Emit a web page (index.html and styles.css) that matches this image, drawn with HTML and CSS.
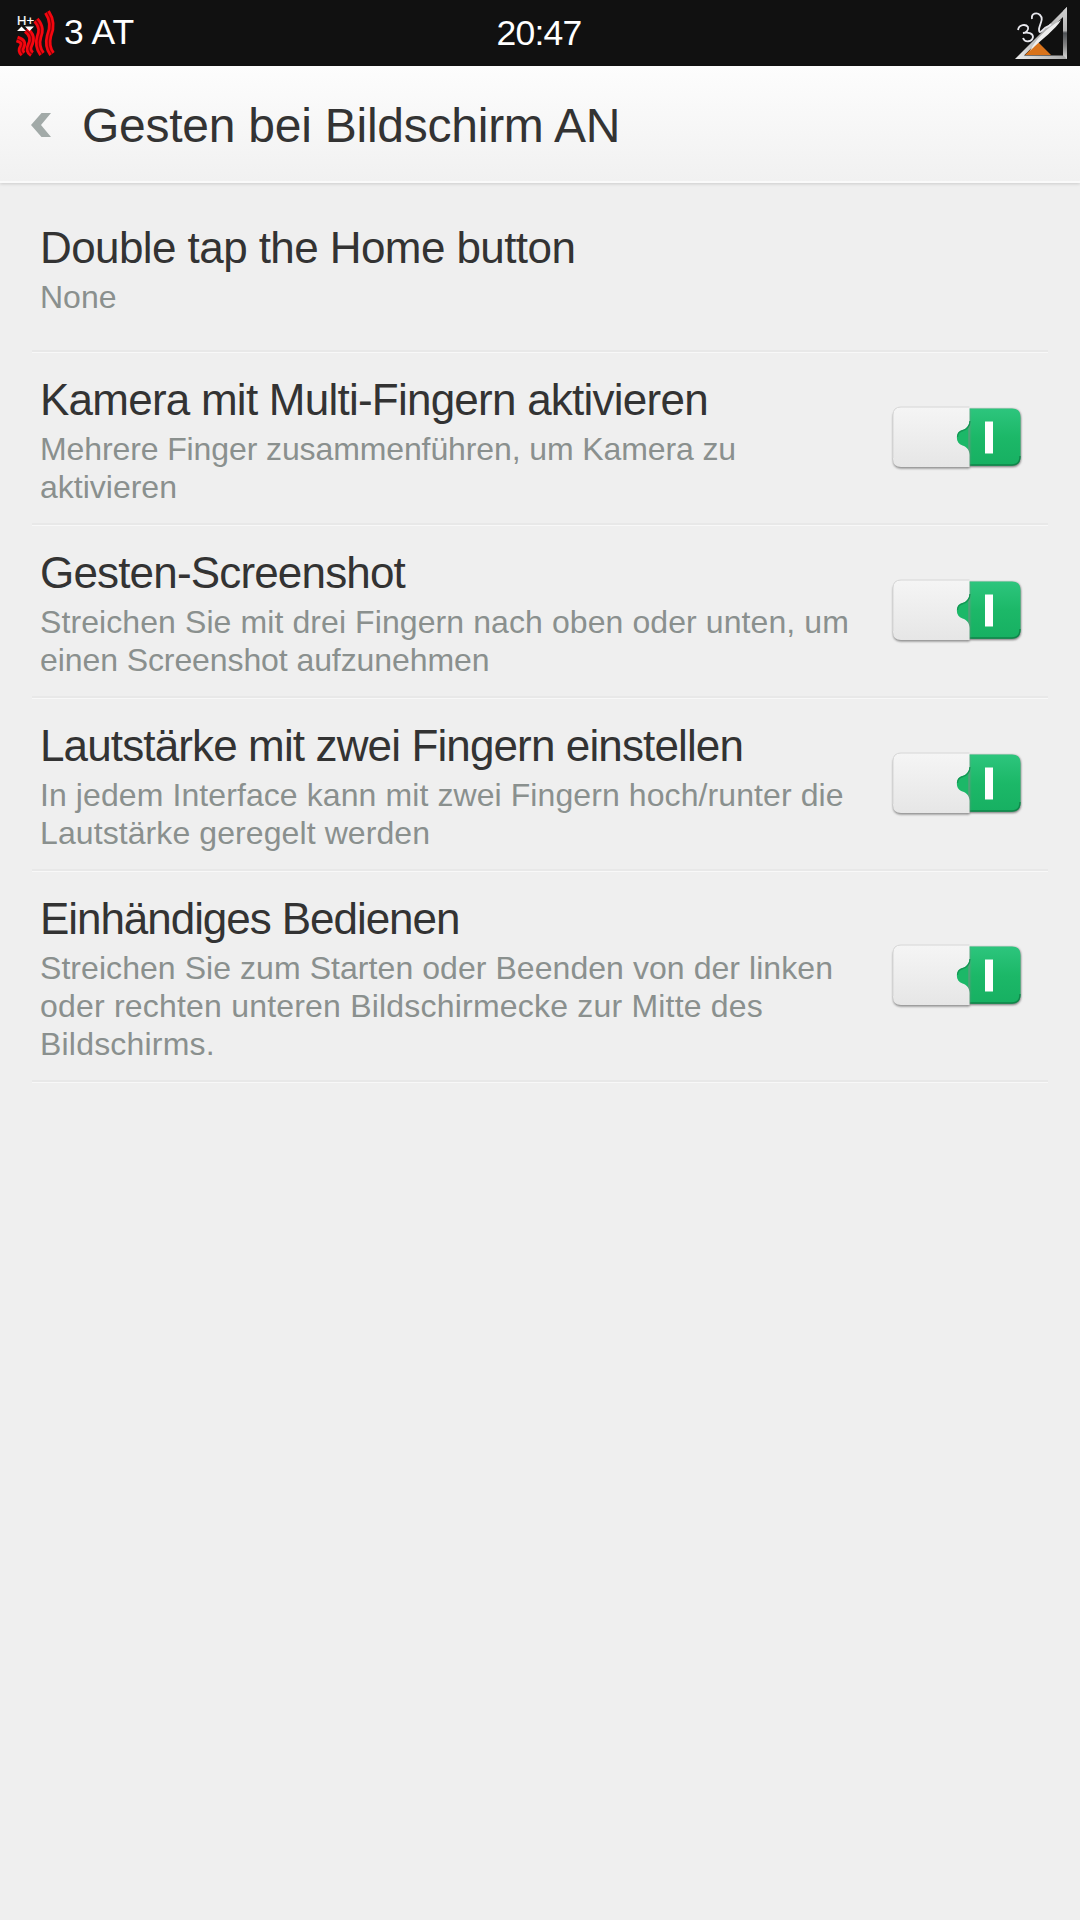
FILE: index.html
```html
<!DOCTYPE html>
<html lang="de">
<head>
<meta charset="utf-8">
<title>Gesten bei Bildschirm AN</title>
<link rel="stylesheet" href="styles.css">
</head>
<body>
<svg class="defs" width="0" height="0" aria-hidden="true">
  <defs>
    <linearGradient id="knob" x1="0" y1="0" x2="0" y2="1"><stop offset="0" stop-color="#f5f5f5"/><stop offset="1" stop-color="#e6e6e6"/></linearGradient>
    <linearGradient id="green" x1="0" y1="0" x2="0" y2="1"><stop offset="0" stop-color="#2dc57d"/><stop offset=".5" stop-color="#1cb868"/><stop offset="1" stop-color="#17b062"/></linearGradient>
    <filter id="soft" x="-10%" y="-10%" width="120%" height="130%"><feGaussianBlur stdDeviation="1"/></filter>
    <symbol id="switch" viewBox="0 0 140 74">
      <path d="M82 7H126Q135 7 135 16V56Q135 65 126 65H82Z" fill="#777" filter="url(#soft)"/>
      <path d="M83 6.500H126Q134.500 6.500 134.500 15V55Q134.500 63.500 126 63.500H83V53C83 48 80 44 76 43.500C68 41 68 29 76 27.500C80 27 83 23 83 19Z" fill="url(#green)"/>
      <path d="M83.500 63H126Q134 63 134 54" fill="none" stroke="#118449" stroke-width="1.300"/>
      <path d="M15 8H83.500V66.500H15Q7 66.500 7 58V16Q7 8 15 8Z" fill="#888" filter="url(#soft)"/>
      <path d="M82.500 15V57H68V15Z" fill="#1cb868"/>
      <path d="M15 5H83.500V19C83.500 24 80 27 76.500 28C69 30 69 41.500 76.500 43.500C80.500 44.500 83.500 48 83.500 53V65H15Q7 65 7 57V13Q7 5 15 5Z" fill="url(#knob)"/>
      <path d="M84 19C84 24 80.500 27.500 77 28.500C73 29.500 71.500 32 71.500 35" fill="none" stroke="#139653" stroke-width="1.300"/>
      <path d="M7 56V13Q7 5 15 5H83.500" fill="none" stroke="#d6d6d6"/>
      <path d="M99 19.500h8v32h-8z" fill="#fff"/>
    </symbol>
  </defs>
</svg>

<header class="status">
  <div class="status-left">
    <svg class="signal" width="44" height="48" viewBox="0 0 44 48">
      <g fill="none" stroke-linejoin="round">
        <g stroke="#f5060f" stroke-width="6.600">
          <path d="M2 29C8 31 9 33 7 37C5 40 6 42 8 44"/>
          <path d="M11 20C18 25 17 31 15 35C13 39 14 42 17 44"/>
          <path d="M21 10C27 17 26 22 24 27C22 34 24 40 27 44"/>
          <path d="M32 2C38 11 37 19 34 26C32 34 34 40 37 44"/>
        </g>
        <g stroke="#8a0008" stroke-width="1.300">
          <path d="M2 29C8 31 9 33 7 37C5 40 6 42 8 44"/>
          <path d="M11 20C18 25 17 31 15 35C13 39 14 42 17 44"/>
          <path d="M21 10C27 17 26 22 24 27C22 34 24 40 27 44"/>
          <path d="M32 2C38 11 37 19 34 26C32 34 34 40 37 44"/>
        </g>
      </g>
      <path d="M2 21L6.500 16.500L11 21ZM10 16.500H19L14.500 21Z" fill="#fff"/>
      <text x="2" y="14.500" class="net">H+</text>
    </svg>
    <span class="carrier">3 AT</span>
  </div>
  <span class="clock">20:47</span>
  <div class="status-right">
    <svg width="56" height="56" viewBox="0 0 56 56">
      <defs>
        <linearGradient id="rim" x1="0" y1="1" x2="1" y2="0"><stop offset="0" stop-color="#eee"/><stop offset=".5" stop-color="#aaa"/><stop offset="1" stop-color="#d2d2d2"/></linearGradient>
        <linearGradient id="edge" x1="0" y1="0" x2="0" y2="1"><stop offset="0" stop-color="#d0d0d0"/><stop offset=".45" stop-color="#b8b8b8"/><stop offset=".5" stop-color="#4d5054"/><stop offset=".75" stop-color="#888"/><stop offset="1" stop-color="#ddd"/></linearGradient>
      </defs>
      <path d="M3 54L55 2V54Z" fill="url(#rim)"/>
      <path d="M51 6L55 2V54L51 50Z" fill="url(#edge)"/>
      <path d="M12 50.500L51 12V50.500Z" fill="#101010"/>
      <path d="M13 50L26 37L39 50Z" fill="#d9731b"/>
      <path d="M18 46C23 35 34 23 49 15C44 24 30 34 18 46Z" fill="#eee"/>
      <path d="M6 25C7 19 14 19 16 22C17 25 14 28 11 28C16 27 21 28 21 32C20 37 13 38 11 33" fill="none" stroke="#e8e8ee" stroke-width="1.800"/>
      <path d="M20 14C19 8 25 7 28 10C32 14 28 18 27 24C27 29 29 27 32 24C34 21 36 23 39 19" fill="none" stroke="#e8e8ee" stroke-width="1.800"/>
    </svg>
  </div>
</header>

<div class="titlebar">
  <svg class="back" width="20" height="24" viewBox="0 0 20 24"><path d="M10.500 0H20L10 12L20 24H10.500L0 12Z" fill="#a2aaa8"/></svg>
  <h1>Gesten bei Bildschirm AN</h1>
</div>

<main class="list">
  <section class="row first">
    <div class="copy"><h2 class="t1">Double tap the Home button</h2><p>None</p></div>
  </section>
  <section class="row">
    <div class="copy"><h2 class="t2">Kamera mit Multi-Fingern aktivieren</h2><p><span class="s2a">Mehrere Finger zusammenführen, um Kamera zu</span><br>aktivieren</p></div>
    <svg class="switch"><use href="#switch"/></svg>
  </section>
  <section class="row">
    <div class="copy"><h2 class="t3">Gesten-Screenshot</h2><p><span class="s3a">Streichen Sie mit drei Fingern nach oben oder unten, um</span><br><span class="s3b">einen Screenshot aufzunehmen</span></p></div>
    <svg class="switch"><use href="#switch"/></svg>
  </section>
  <section class="row">
    <div class="copy"><h2 class="t4">Lautstärke mit zwei Fingern einstellen</h2><p class="s4">In jedem Interface kann mit zwei Fingern hoch/runter die<br>Lautstärke geregelt werden</p></div>
    <svg class="switch"><use href="#switch"/></svg>
  </section>
  <section class="row tall">
    <div class="copy"><h2 class="t5">Einhändiges Bedienen</h2><p><span class="s5a">Streichen Sie zum Starten oder Beenden von der linken</span><br><span class="s5b">oder rechten unteren Bildschirmecke zur Mitte des<br>Bildschirms.</span></p></div>
    <svg class="switch"><use href="#switch"/></svg>
  </section>
</main>
</body>
</html>
```
FILE: styles.css
```css
* { box-sizing: border-box; }
body {
  margin: 0;
  min-height: 1920px;
  background: #efefef;
  color: #333;
  font-family: "Liberation Sans", Arial, sans-serif;
}
h1, h2, p { margin: 0; font-weight: 400; white-space: nowrap; }
.defs { display: block; height: 0; }

.status {
  display: grid;
  grid-template-columns: 1fr auto 1fr;
  align-items: center;
  height: 66px;
  padding: 0 12px 0 15px;
  background: #111;
  color: #fff;
  font-size: 35.5px;
}
.status-left { display: flex; align-items: center; gap: 5px; }
.signal { margin-top: 1px; }
.net { font: 13px "Liberation Sans", Arial, sans-serif; fill: #fff; stroke: #fff; stroke-width: .2px; }
.carrier { padding-bottom: 2px; letter-spacing: -.1px; }
.clock { margin-left: -5px; letter-spacing: -.8px; }
.status-right { display: flex; justify-content: flex-end; }

.titlebar {
  display: flex;
  align-items: center;
  height: 117px;
  padding-left: 31px;
  gap: 31px;
  background: linear-gradient(#fdfdfd, #f1f1f1);
  border-bottom: 2px solid #fafafa;
  box-shadow: 0 1px 3px rgba(0, 0, 0, .15);
}
.back { margin-top: 2px; }
.titlebar h1 { padding-top: 5px; font-size: 48px; line-height: 56px; letter-spacing: -.25px; }

.list { padding: 0 32px; }
.row {
  display: flex;
  align-items: center;
  justify-content: space-between;
  height: 173px;
  padding: 0 21px 0 8px;
  border-bottom: 2px solid #e8e8e8;
  box-shadow: 0 1px 0 #f8f8f8;
}
.row.first { height: 169px; }
.row.tall { height: 211px; }
.row h2 { font-size: 44px; line-height: 52px; }
.row p { padding-top: 4px; margin-bottom: -4px; font-size: 32px; line-height: 38px; color: #8a908e; }
.switch { width: 140px; height: 74px; flex: none; margin: 2px 1px 0 0; }

/* Tracking per line of copy */
.t1 { letter-spacing: -.58px; }
.t2 { letter-spacing: -.76px; }
.t3 { letter-spacing: -.83px; }
.t4 { letter-spacing: -.87px; }
.t5 { letter-spacing: -1.05px; }
.s2a { letter-spacing: -.11px; }
.s3a { letter-spacing: .09px; }
.s3b { letter-spacing: -.09px; }
.s4 { letter-spacing: .09px; }
.s5a { letter-spacing: .06px; }
.s5b { letter-spacing: .2px; }
```
